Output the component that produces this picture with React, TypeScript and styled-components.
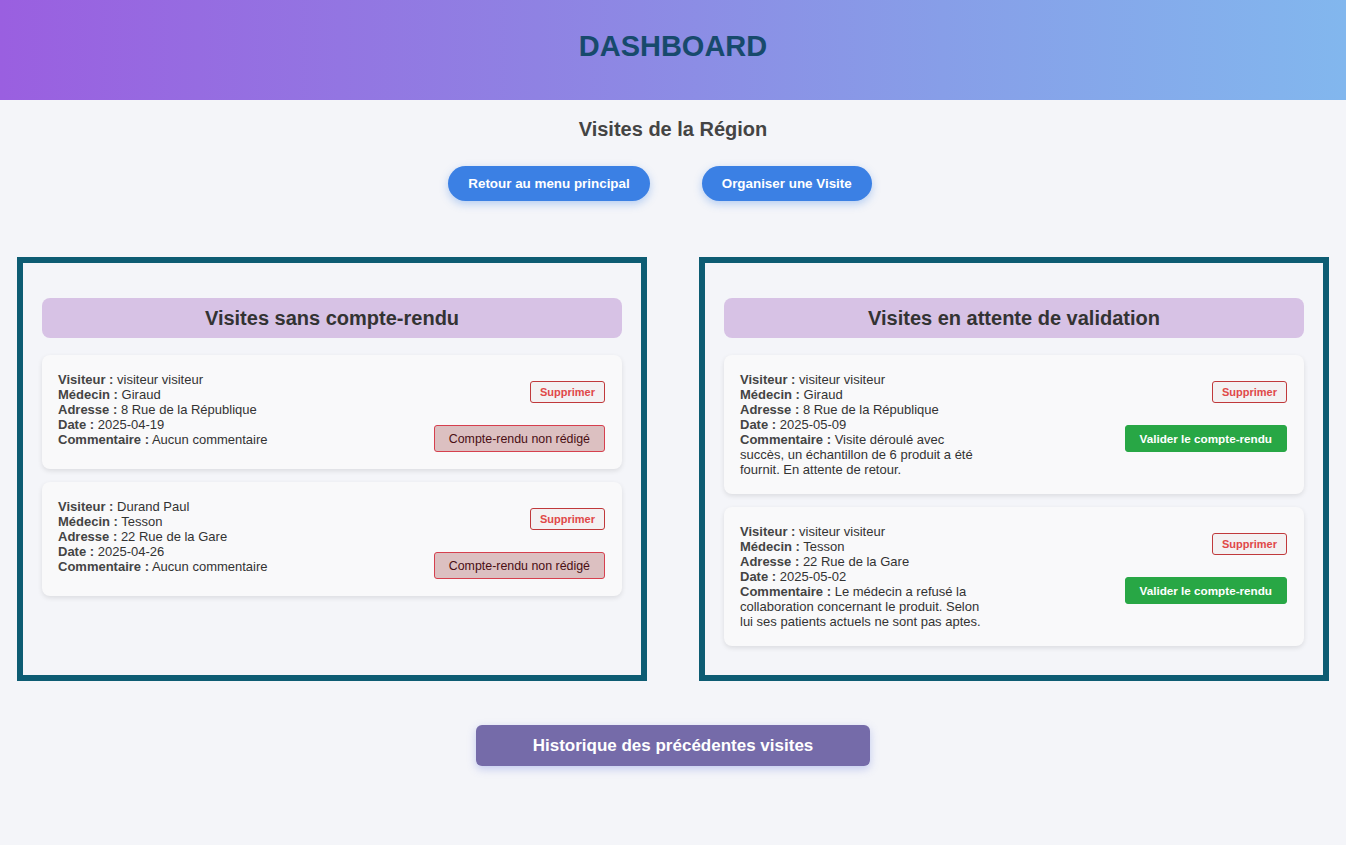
import React from "react";
import styled, { createGlobalStyle } from "styled-components";

const GlobalStyle = createGlobalStyle`
  html, body { margin: 0; padding: 0; }
  body {
    background: #f4f5f9;
    font-family: "Liberation Sans", Arial, sans-serif;
    color: #333;
  }
`;

const Header = styled.header`
  height: 100px;
  background: linear-gradient(90deg, #9a5fe0 0%, #8f82e3 40%, #879ee8 70%, #82b7ee 100%);
  display: flex;
  align-items: center;
  justify-content: center;
`;

const Title = styled.h1`
  margin: 0;
  font-size: 29px;
  font-weight: bold;
  color: #174a6c;
  padding-bottom: 8px;
`;

const SubTitle = styled.h2`
  margin: 18px 0 0;
  text-align: center;
  font-size: 20px;
  font-weight: bold;
  color: #444;
  line-height: 23px;
`;

const NavRow = styled.div`
  display: flex;
  justify-content: center;
  gap: 52px;
  margin-top: 25px;
  padding-right: 26px;
`;

const PillButton = styled.button`
  height: 35px;
  padding: 0 20px;
  border: none;
  border-radius: 18px;
  background: #3b80e4;
  color: #fff;
  font-family: "Liberation Sans", Arial, sans-serif;
  font-weight: bold;
  font-size: 13.4px;
  box-shadow: 0 3px 8px rgba(59, 128, 228, 0.35);
  cursor: pointer;
`;

const Columns = styled.div`
  display: grid;
  grid-template-columns: 630px 630px;
  gap: 52px;
  justify-content: center;
  margin-top: 56px;
`;

const Panel = styled.section`
  border: 6px solid #0d5c73;
  padding: 35px 19px 18px;
  display: flex;
  flex-direction: column;
  gap: 13px;
  min-height: 424px;
  box-sizing: border-box;
`;

const PanelTitle = styled.h3`
  margin: 0 0 4px;
  height: 40px;
  border-radius: 8px;
  background: #d7c2e5;
  display: flex;
  align-items: center;
  justify-content: center;
  font-size: 20px;
  font-weight: bold;
  color: #333;
`;

const Card = styled.div`
  background: #f9f9fa;
  border-radius: 8px;
  box-shadow: 0 2px 5px rgba(0, 0, 0, 0.1);
  padding: 17px 17px 17px 16px;
  display: flex;
  justify-content: space-between;
  align-items: flex-start;
`;

const Info = styled.div`
  width: 246px;
  font-size: 13px;
  line-height: 15px;
  color: #333;
`;

const Line = styled.div``;

const Label = styled.b`
  font-weight: bold;
  color: #444;
`;

const Actions = styled.div`
  display: flex;
  flex-direction: column;
  align-items: flex-end;
  gap: 22px;
  padding-top: 9px;
`;

const DeleteButton = styled.button`
  height: 22px;
  padding: 0 9px;
  border: 1px solid #c0393b;
  border-radius: 3px;
  background: #f3f1f2;
  color: #e04848;
  font-family: "Liberation Sans", Arial, sans-serif;
  font-size: 11px;
  font-weight: bold;
  cursor: pointer;
`;

const StatusButton = styled.button<{ $variant: "pending" | "validate" }>`
  height: 27px;
  padding: 0 14px;
  border-radius: 3px;
  font-family: "Liberation Sans", Arial, sans-serif;
  font-size: ${(p) => (p.$variant === "pending" ? "12.4px" : "11.7px")};
  cursor: pointer;
  border: 1px solid ${(p) => (p.$variant === "pending" ? "#d6404e" : "#28a745")};
  background: ${(p) => (p.$variant === "pending" ? "#dcc0c1" : "#28a745")};
  color: ${(p) => (p.$variant === "pending" ? "#4a0f14" : "#fff")};
  font-weight: ${(p) => (p.$variant === "pending" ? "normal" : "bold")};
`;

const Footer = styled.div`
  display: flex;
  justify-content: center;
  margin-top: 44px;
  padding-bottom: 79px;
`;

const HistoryButton = styled.button`
  width: 394px;
  height: 41px;
  border: none;
  border-radius: 6px;
  background: #756ba9;
  color: #fff;
  font-family: "Liberation Sans", Arial, sans-serif;
  font-size: 17px;
  font-weight: bold;
  box-shadow: 0 3px 8px rgba(100, 120, 220, 0.35);
  cursor: pointer;
`;

type Visit = {
  visiteur: string;
  medecin: string;
  adresse: string;
  date: string;
  commentaire: string;
};

const sansCR: Visit[] = [
  { visiteur: "visiteur visiteur", medecin: "Giraud", adresse: "8 Rue de la République", date: "2025-04-19", commentaire: "Aucun commentaire" },
  { visiteur: "Durand Paul", medecin: "Tesson", adresse: "22 Rue de la Gare", date: "2025-04-26", commentaire: "Aucun commentaire" },
];

const enAttente: Visit[] = [
  { visiteur: "visiteur visiteur", medecin: "Giraud", adresse: "8 Rue de la République", date: "2025-05-09", commentaire: "Visite déroulé avec succès, un échantillon de 6 produit a été fournit. En attente de retour." },
  { visiteur: "visiteur visiteur", medecin: "Tesson", adresse: "22 Rue de la Gare", date: "2025-05-02", commentaire: "Le médecin a refusé la collaboration concernant le produit. Selon lui ses patients actuels ne sont pas aptes." },
];

const VisitCard = ({ v, variant }: { v: Visit; variant: "pending" | "validate" }) => (
  <Card>
    <Info>
      <Line><Label>Visiteur :</Label> {v.visiteur}</Line>
      <Line><Label>Médecin :</Label> {v.medecin}</Line>
      <Line><Label>Adresse :</Label> {v.adresse}</Line>
      <Line><Label>Date :</Label> {v.date}</Line>
      <Line><Label>Commentaire :</Label> {v.commentaire}</Line>
    </Info>
    <Actions>
      <DeleteButton>Supprimer</DeleteButton>
      <StatusButton $variant={variant}>
        {variant === "pending" ? "Compte-rendu non rédigé" : "Valider le compte-rendu"}
      </StatusButton>
    </Actions>
  </Card>
);

export default function App() {
  return (
    <>
      <GlobalStyle />
      <Header>
        <Title>DASHBOARD</Title>
      </Header>
      <SubTitle>Visites de la Région</SubTitle>
      <NavRow>
        <PillButton>Retour au menu principal</PillButton>
        <PillButton>Organiser une Visite</PillButton>
      </NavRow>
      <Columns>
        <Panel>
          <PanelTitle>Visites sans compte-rendu</PanelTitle>
          {sansCR.map((v, i) => (
            <VisitCard key={i} v={v} variant="pending" />
          ))}
        </Panel>
        <Panel>
          <PanelTitle>Visites en attente de validation</PanelTitle>
          {enAttente.map((v, i) => (
            <VisitCard key={i} v={v} variant="validate" />
          ))}
        </Panel>
      </Columns>
      <Footer>
        <HistoryButton>Historique des précédentes visites</HistoryButton>
      </Footer>
    </>
  );
}
